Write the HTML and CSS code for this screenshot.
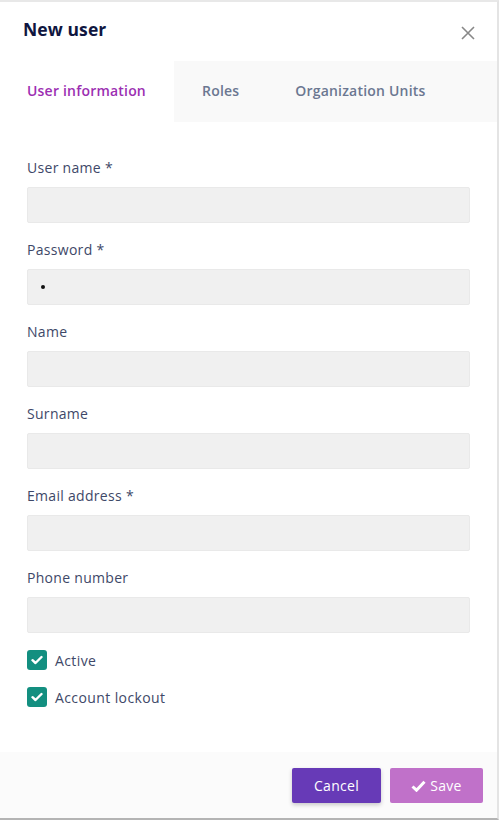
FILE: index.html
```html
<!DOCTYPE html>
<html>
<head>
<meta charset="utf-8">
<link rel="stylesheet" href="styles.css">
</head>
<body>
<div class="modal">
  <div class="header">
    <h1 class="title">New user</h1>
    <button class="close" aria-label="Close">
      <svg width="14" height="14" viewBox="0 0 14 14"><path d="M1 1L13 13M13 1L1 13" stroke="#888" stroke-width="1.6" fill="none"/></svg>
    </button>
  </div>
  <div class="tabs">
    <div class="tab active">User information</div>
    <div class="tab-rest">
      <div class="tab">Roles</div>
      <div class="tab">Organization Units</div>
    </div>
  </div>
  <div class="body">
    <div class="field">
      <label class="label">User name *</label>
      <div class="input"></div>
    </div>
    <div class="field">
      <label class="label">Password *</label>
      <div class="input"><span class="dot"></span></div>
    </div>
    <div class="field">
      <label class="label">Name</label>
      <div class="input"></div>
    </div>
    <div class="field">
      <label class="label">Surname</label>
      <div class="input"></div>
    </div>
    <div class="field">
      <label class="label">Email address *</label>
      <div class="input"></div>
    </div>
    <div class="field">
      <label class="label">Phone number</label>
      <div class="input"></div>
    </div>
    <div class="check-row">
      <span class="checkbox"><svg width="12" height="10" viewBox="0 0 12 10"><path d="M1.5 5.2L4.5 8L10.5 2" stroke="#fff" stroke-width="2.4" fill="none" stroke-linecap="round" stroke-linejoin="round"/></svg></span>
      <span class="check-label">Active</span>
    </div>
    <div class="check-row">
      <span class="checkbox"><svg width="12" height="10" viewBox="0 0 12 10"><path d="M1.5 5.2L4.5 8L10.5 2" stroke="#fff" stroke-width="2.4" fill="none" stroke-linecap="round" stroke-linejoin="round"/></svg></span>
      <span class="check-label">Account lockout</span>
    </div>
  </div>
  <div class="footer">
    <button class="btn cancel">Cancel</button>
    <button class="btn save"><svg width="15" height="12" viewBox="0 0 15 12"><path d="M1.5 6.5L5.5 10.2L13.5 1.8" stroke="#fff" stroke-width="3" fill="none"/></svg>Save</button>
  </div>
</div>
</body>
</html>
```
FILE: styles.css
```css
* { box-sizing: border-box; }
html, body { margin: 0; padding: 0; background: #fff; }
body { font-family: "Open Sans", "Noto Sans", sans-serif; width: 500px; height: 820px; }

.modal {
  width: 499px;
  height: 820px;
  border-top: 2px solid #e8e8e8;
  border-right: 2px solid #e4e4e4;
  border-bottom: 2px solid #b4b4b4;
  display: flex;
  flex-direction: column;
  background: #fff;
}

.header {
  height: 59px;
  display: flex;
  justify-content: space-between;
  align-items: flex-start;
  padding: 15px 22px 0 23px;
}
.title {
  margin: 0;
  font-size: 17.5px;
  font-weight: 700;
  color: #0f1640;
  line-height: 24px;
  letter-spacing: 0.1px;
}
.close {
  border: 0;
  background: none;
  padding: 0;
  margin-top: 9px;
  width: 14px;
  height: 14px;
  display: flex;
}

.tabs {
  display: flex;
  height: 61px;
}
.tab {
  font-size: 14px;
  font-weight: 600;
  color: #6b7791;
  display: flex;
  align-items: center;
  padding-bottom: 2px;
  letter-spacing: 0.2px;
}
.tab.active {
  width: 174px;
  padding-left: 27px;
  color: #9c2fb2;
  background: #fff;
}
.tab-rest {
  flex: 1;
  background: #f9f9f9;
  display: flex;
  gap: 56px;
  padding-left: 28px;
}

.body {
  padding: 36px 27px 0 27px;
  flex: 1;
}
.field { margin-bottom: 17px; }
.label {
  display: block;
  font-size: 14px;
  line-height: 20px;
  color: #3e4868;
  margin-bottom: 9px;
  letter-spacing: 0.3px;
}
.input {
  height: 36px;
  width: 443px;
  background: #f0f0f0;
  border: 1px solid #e9e9e9;
  border-radius: 2px;
  display: flex;
  align-items: center;
  padding-left: 13px;
}
.dot {
  width: 4px;
  height: 4px;
  border-radius: 50%;
  background: #111;
}

.check-row {
  display: flex;
  align-items: center;
  gap: 8px;
  height: 20px;
  margin-bottom: 17px;
}
.checkbox {
  width: 20px;
  height: 20px;
  border-radius: 3px;
  background: #138f80;
  display: flex;
  align-items: center;
  justify-content: center;
}
.check-label {
  font-size: 14px;
  color: #3e4868;
  letter-spacing: 0.4px;
}

.footer {
  height: 66px;
  background: #fbfbfb;
  display: flex;
  justify-content: flex-end;
  align-items: flex-start;
  padding: 16px 14px 0 0;
  gap: 9px;
}
.btn {
  height: 35px;
  border: 0;
  border-radius: 2px;
  color: #fff;
  font-family: inherit;
  font-size: 14px;
  font-weight: 500;
  display: flex;
  align-items: center;
  justify-content: center;
  gap: 4px;
  letter-spacing: 0.3px;
}
.cancel {
  width: 89px;
  background: #673ab7;
  box-shadow: 0 2px 4px rgba(0,0,0,0.2);
}
.save {
  width: 93px;
  background: #c071c9;
}
```
